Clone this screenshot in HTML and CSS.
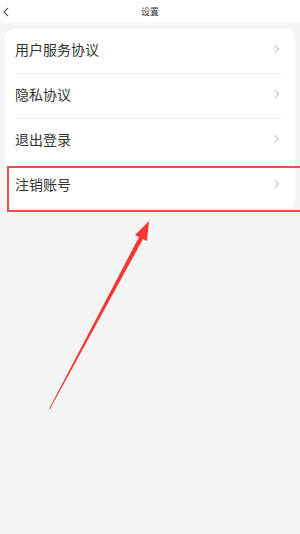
FILE: index.html
```html
<!DOCTYPE html>
<html lang="zh">
<head>
  <meta charset="UTF-8">
  <title>设置</title>
  <link rel="stylesheet" href="styles.css">
</head>
<body>

  <div class="topbar">
    <svg class="back" width="8" height="10" viewBox="0 0 8 10"><path d="M6 1 L2 5 L6 9" fill="none" stroke="#555" stroke-width="1.1"/></svg>
    <span class="title">设置</span>
  </div>

  <div class="card">
    <div class="row"><span>用户服务协议</span><i class="arrow"></i></div>
    <div class="row"><span>隐私协议</span><i class="arrow"></i></div>
    <div class="row"><span>退出登录</span><i class="arrow"></i></div>
    <div class="row last"><span>注销账号</span><i class="arrow"></i></div>
  </div>

  <!-- 标注 -->
  <div class="mark-box"></div>
  <svg class="mark-arrow" width="300" height="534" viewBox="0 0 300 534">
    <polygon points="49,409 139,237 135,235 149,221 147,241 143,239 50,409" fill="#fb3434"/>
  </svg>

</body>
</html>
```

FILE: styles.css
```css
body {
  margin: 0;
  background: #f4f4f4;
  font-family: "Noto Sans CJK SC", "Noto Sans", sans-serif;
  color: #333;
  height: 534px;
  position: relative;
  overflow: hidden;
}

.topbar {
  height: 23px;
  background: #fff;
  display: flex;
  align-items: center;
  justify-content: center;
  position: relative;
}

.topbar .back {
  position: absolute;
  left: 2px;
  top: 7px;
}

.topbar .title {
  font-size: 9px;
  color: #333;
}

.card {
  margin: 6px 5px 0;
  background: #fff;
  border-radius: 9px;
  padding: 0 10px;
}

.row {
  height: 45px;
  box-sizing: border-box;
  padding-bottom: 4px;
  display: flex;
  align-items: center;
  justify-content: space-between;
  border-bottom: 1px solid #f2f2f2;
  font-size: 14px;
}

.row.last {
  border-bottom: none;
  height: 44px;
}

.arrow {
  width: 5px;
  height: 5px;
  border-top: 1px solid #c4c4c4;
  border-right: 1px solid #c4c4c4;
  transform: rotate(45deg);
  margin-right: 7px;
}

.mark-box {
  position: absolute;
  left: 7px;
  top: 166px;
  width: 295px;
  height: 42px;
  border: 2px solid #f44a4a;
}

.mark-arrow {
  position: absolute;
  left: 0;
  top: 0;
}
```
